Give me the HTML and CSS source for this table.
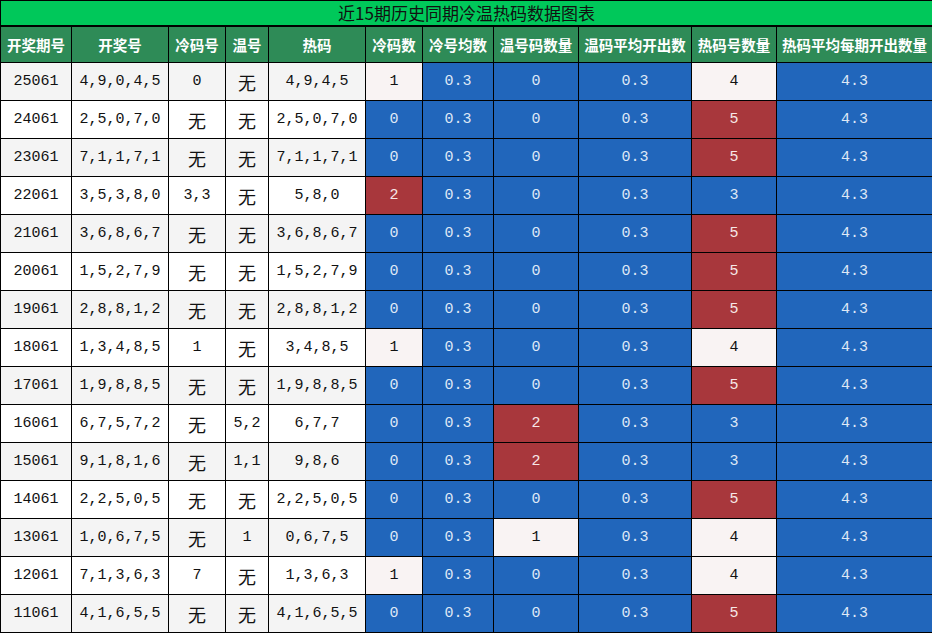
FILE: index.html
```html
<!DOCTYPE html>
<html lang="zh">
<head>
<meta charset="utf-8">
<title>近15期历史同期冷温热码数据图表</title>
<link rel="stylesheet" href="styles.css">
</head>
<body>
<table class="chart">
<colgroup>
<col style="width:71px"><col style="width:97px"><col style="width:57px"><col style="width:43px"><col style="width:97px"><col style="width:57px"><col style="width:71px"><col style="width:85px"><col style="width:113px"><col style="width:85px"><col style="width:156px">
</colgroup>
<thead>
<tr class="title"><th colspan="11">近15期历史同期冷温热码数据图表</th></tr>
<tr class="head"><th>开奖期号</th><th>开奖号</th><th>冷码号</th><th>温号</th><th>热码</th><th>冷码数</th><th>冷号均数</th><th>温号码数量</th><th>温码平均开出数</th><th>热码号数量</th><th>热码平均每期开出数量</th></tr>
</thead>
<tbody>
<tr class="odd"><td>25061</td><td>4,9,0,4,5</td><td>0</td><td><span class="zh">无</span></td><td>4,9,4,5</td><td class="pale">1</td><td class="blue">0.3</td><td class="blue">0</td><td class="blue">0.3</td><td class="pale">4</td><td class="blue">4.3</td></tr>
<tr><td>24061</td><td>2,5,0,7,0</td><td><span class="zh">无</span></td><td><span class="zh">无</span></td><td>2,5,0,7,0</td><td class="blue">0</td><td class="blue">0.3</td><td class="blue">0</td><td class="blue">0.3</td><td class="red">5</td><td class="blue">4.3</td></tr>
<tr class="odd"><td>23061</td><td>7,1,1,7,1</td><td><span class="zh">无</span></td><td><span class="zh">无</span></td><td>7,1,1,7,1</td><td class="blue">0</td><td class="blue">0.3</td><td class="blue">0</td><td class="blue">0.3</td><td class="red">5</td><td class="blue">4.3</td></tr>
<tr><td>22061</td><td>3,5,3,8,0</td><td>3,3</td><td><span class="zh">无</span></td><td>5,8,0</td><td class="red">2</td><td class="blue">0.3</td><td class="blue">0</td><td class="blue">0.3</td><td class="blue">3</td><td class="blue">4.3</td></tr>
<tr class="odd"><td>21061</td><td>3,6,8,6,7</td><td><span class="zh">无</span></td><td><span class="zh">无</span></td><td>3,6,8,6,7</td><td class="blue">0</td><td class="blue">0.3</td><td class="blue">0</td><td class="blue">0.3</td><td class="red">5</td><td class="blue">4.3</td></tr>
<tr><td>20061</td><td>1,5,2,7,9</td><td><span class="zh">无</span></td><td><span class="zh">无</span></td><td>1,5,2,7,9</td><td class="blue">0</td><td class="blue">0.3</td><td class="blue">0</td><td class="blue">0.3</td><td class="red">5</td><td class="blue">4.3</td></tr>
<tr class="odd"><td>19061</td><td>2,8,8,1,2</td><td><span class="zh">无</span></td><td><span class="zh">无</span></td><td>2,8,8,1,2</td><td class="blue">0</td><td class="blue">0.3</td><td class="blue">0</td><td class="blue">0.3</td><td class="red">5</td><td class="blue">4.3</td></tr>
<tr><td>18061</td><td>1,3,4,8,5</td><td>1</td><td><span class="zh">无</span></td><td>3,4,8,5</td><td class="pale">1</td><td class="blue">0.3</td><td class="blue">0</td><td class="blue">0.3</td><td class="pale">4</td><td class="blue">4.3</td></tr>
<tr class="odd"><td>17061</td><td>1,9,8,8,5</td><td><span class="zh">无</span></td><td><span class="zh">无</span></td><td>1,9,8,8,5</td><td class="blue">0</td><td class="blue">0.3</td><td class="blue">0</td><td class="blue">0.3</td><td class="red">5</td><td class="blue">4.3</td></tr>
<tr><td>16061</td><td>6,7,5,7,2</td><td><span class="zh">无</span></td><td>5,2</td><td>6,7,7</td><td class="blue">0</td><td class="blue">0.3</td><td class="red">2</td><td class="blue">0.3</td><td class="blue">3</td><td class="blue">4.3</td></tr>
<tr class="odd"><td>15061</td><td>9,1,8,1,6</td><td><span class="zh">无</span></td><td>1,1</td><td>9,8,6</td><td class="blue">0</td><td class="blue">0.3</td><td class="red">2</td><td class="blue">0.3</td><td class="blue">3</td><td class="blue">4.3</td></tr>
<tr><td>14061</td><td>2,2,5,0,5</td><td><span class="zh">无</span></td><td><span class="zh">无</span></td><td>2,2,5,0,5</td><td class="blue">0</td><td class="blue">0.3</td><td class="blue">0</td><td class="blue">0.3</td><td class="red">5</td><td class="blue">4.3</td></tr>
<tr class="odd"><td>13061</td><td>1,0,6,7,5</td><td><span class="zh">无</span></td><td>1</td><td>0,6,7,5</td><td class="blue">0</td><td class="blue">0.3</td><td class="pale">1</td><td class="blue">0.3</td><td class="pale">4</td><td class="blue">4.3</td></tr>
<tr><td>12061</td><td>7,1,3,6,3</td><td>7</td><td><span class="zh">无</span></td><td>1,3,6,3</td><td class="pale">1</td><td class="blue">0.3</td><td class="blue">0</td><td class="blue">0.3</td><td class="pale">4</td><td class="blue">4.3</td></tr>
<tr class="odd"><td>11061</td><td>4,1,6,5,5</td><td><span class="zh">无</span></td><td><span class="zh">无</span></td><td>4,1,6,5,5</td><td class="blue">0</td><td class="blue">0.3</td><td class="blue">0</td><td class="blue">0.3</td><td class="red">5</td><td class="blue">4.3</td></tr>
</tbody>
</table>
</body>
</html>
```
FILE: styles.css
```css
html, body {
  margin: 0;
  padding: 0;
  background: #ffffff;
}
.chart {
  width: 932px;
  border-collapse: collapse;
  table-layout: fixed;
  font-family: "Liberation Mono", "Noto Sans CJK SC", monospace;
  font-size: 15px;
  color: #111;
}
.chart th, .chart td {
  border: 1px solid #000;
  padding: 0;
  text-align: center;
  overflow: hidden;
  white-space: nowrap;
}
.title th {
  height: 24px;
  background: #00c85a;
  color: #111;
  font-family: "Noto Sans CJK SC", sans-serif;
  font-weight: normal;
  font-size: 17px;
  line-height: 24px;
  border-bottom-width: 2px;
}
.head th {
  height: 35px;
  background: #2e8b57;
  color: #ffffff;
  font-family: "Noto Sans CJK SC", sans-serif;
  font-weight: bold;
  font-size: 14.5px;
  line-height: 20px;
}
.chart td {
  height: 37px;
  background: #ffffff;
  line-height: 20px;
}
.chart tr.odd td {
  background: #f4f4f4;
}
.chart tr td.blue {
  background: #2166bb;
  color: #dfe8f6;
}
.chart tr td.red {
  background: #a8373c;
  color: #f7e7e7;
}
.chart tr td.pale {
  background: #f9f3f3;
  color: #111;
}
.zh {
  font-family: "Noto Sans CJK SC", sans-serif;
  font-size: 18px;
  position: relative;
  top: 3px;
}
```
